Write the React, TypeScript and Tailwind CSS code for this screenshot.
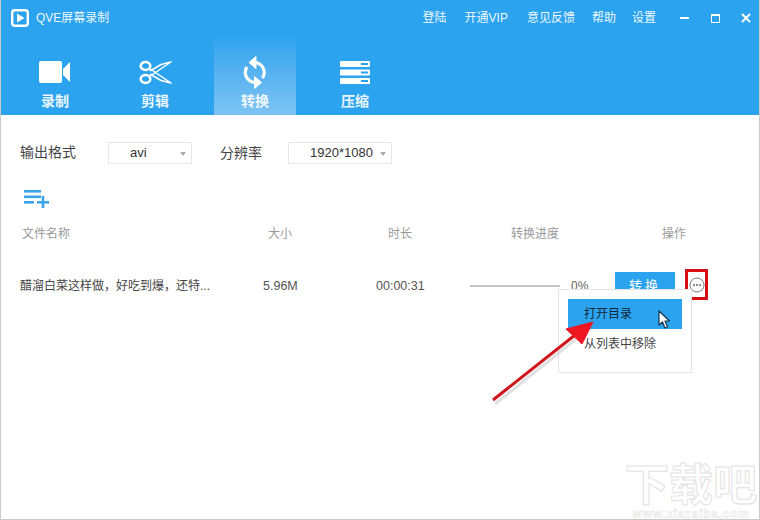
import React from "react";

const font = { fontFamily: '"Liberation Sans","Noto Sans CJK SC",sans-serif' };

function Cam() {
  return (
    <svg width="32" height="22" viewBox="0 0 32 22" fill="#fff">
      <rect x="0" y="0" width="23" height="22" rx="2" />
      <path d="M24 8 L31 1 V21 L24 14 Z" />
    </svg>
  );
}
function Scissors() {
  return (
    <svg width="33" height="25" viewBox="0 0 33 25" fill="none" stroke="#fff">
      <ellipse cx="6.5" cy="6" rx="4.8" ry="4" strokeWidth="2.6" />
      <ellipse cx="6.5" cy="19" rx="4.8" ry="4" strokeWidth="2.6" />
      <path d="M10.5 8.5 L32 23 L22 20.5 L11 14" strokeWidth="1.5" strokeLinejoin="round" />
      <path d="M10.5 16.5 L32 2 L22 4.5 L11 11" strokeWidth="1.5" strokeLinejoin="round" />
    </svg>
  );
}
function Sync() {
  return (
    <svg width="26" height="33" viewBox="0 0 26 33" fill="none">
      <path d="M13 6.5 A10 10 0 0 1 20.5 22" stroke="#fff" strokeWidth="3.2" />
      <path d="M13 26.5 A10 10 0 0 1 5 11" stroke="#fff" strokeWidth="3.2" />
      <path d="M7 6.5 L14 0.5 L14 12.5 Z" fill="#fff" stroke="#fff" strokeLinejoin="round" />
      <path d="M19.5 26.5 L12.5 20.5 L12.5 32.5 Z" fill="#fff" stroke="#fff" strokeLinejoin="round" />
    </svg>
  );
}
function Stack() {
  return (
    <svg width="30" height="23" viewBox="0 0 30 23">
      <rect x="0" y="0" width="30" height="6" rx="1" fill="#fff" />
      <rect x="0" y="8.5" width="30" height="6" rx="1" fill="#fff" />
      <rect x="0" y="17" width="30" height="6" rx="1" fill="#fff" />
      <rect x="21" y="2" width="7" height="2" fill="#2ca3ee" />
      <rect x="21" y="10.5" width="7" height="2" fill="#2ca3ee" />
      <rect x="21" y="19" width="7" height="2" fill="#2ca3ee" />
    </svg>
  );
}

function Tab({ icon, label, active }: { icon: React.ReactNode; label: string; active?: boolean }) {
  return (
    <div
      className={
        "w-[82px] h-[79px] flex flex-col items-center " +
        (active ? "bg-gradient-to-b from-[#2ca3ee] to-[#7cc3f3]" : "")
      }
    >
      <div className="h-[46px] mt-[13px] flex items-center justify-center">{icon}</div>
      <div className="text-[14px] leading-[20px] font-bold text-white/90 -mt-[4px]">{label}</div>
    </div>
  );
}

function Select({ value, w }: { value: string; w: string }) {
  return (
    <div className={"h-[22px] border border-[#e6e6e6] relative flex items-center text-[13px] text-[#333] " + w}>
      <span className="ml-[21px]">{value}</span>
      <span className="absolute right-[5px] top-[9px] w-0 h-0 border-l-[3px] border-r-[3px] border-t-[4px] border-l-transparent border-r-transparent border-t-[#aaa]" />
    </div>
  );
}

export default function App() {
  return (
    <div className="w-[760px] h-[520px] bg-white relative overflow-hidden flex flex-col border-x border-b border-[#c9c9c9]" style={font}>
      <header className="h-[115px] bg-[#2ca3ee] -mx-px shrink-0 flex flex-col">
        <div className="h-[36px] flex items-center text-white/95 text-[12px]">
          <svg className="ml-[11px]" width="18" height="18" viewBox="0 0 18 18">
            <rect x="1.2" y="1.2" width="15.6" height="15.6" rx="2.5" fill="none" stroke="#fff" strokeWidth="2.4" />
            <path d="M6 4.5 L13.5 9 L6 13.5 Z" fill="#fff" />
          </svg>
          <span className="ml-[7px] text-[12px]">QVE屏幕录制</span>
          <div className="ml-auto flex items-center">
            <span className="mr-[18px]">登陆</span>
            <span className="mr-[19px]">开通VIP</span>
            <span className="mr-[17px]">意见反馈</span>
            <span className="mr-[16px]">帮助</span>
            <span className="mr-[24px]">设置</span>
            <span className="w-[9px] h-[2px] bg-white mr-[22px]" />
            <span className="w-[9px] h-[9px] border-[1.5px] border-white border-t-2 mr-[21px]" />
            <svg className="mr-[9px]" width="10" height="10" viewBox="0 0 10 10" stroke="#fff" strokeWidth="2">
              <path d="M1 1 L9 9 M9 1 L1 9" />
            </svg>
          </div>
        </div>
        <div className="flex gap-[18px] pl-[14px]">
          <Tab icon={<Cam />} label="录制" />
          <Tab icon={<Scissors />} label="剪辑" />
          <Tab icon={<Sync />} label="转换" active />
          <Tab icon={<Stack />} label="压缩" />
        </div>
      </header>

      <main className="flex-1 relative text-[12px]">
        <div className="flex items-center pt-[28px] h-[48px]">
          <span className="ml-[19px] w-[88px] text-[14px] text-[#444] -mt-[2px]">输出格式</span>
          <Select value="avi" w="w-[84px]" />
          <span className="ml-[28px] w-[68px] text-[14px] text-[#444]">分辨率</span>
          <Select value="1920*1080" w="w-[104px]" />
        </div>

        <svg className="ml-[23px] mt-[27px] block" width="25" height="18" viewBox="0 0 25 18" fill="#3aa5e8">
          <rect x="0" y="0" width="17" height="2.6" />
          <rect x="0" y="5.5" width="17" height="2.6" />
          <rect x="0" y="11" width="10" height="2.6" />
          <rect x="13" y="11" width="12" height="2.6" />
          <rect x="17.7" y="6" width="2.6" height="12" />
        </svg>

        <div className="flex h-[24px] items-center mt-[14px] text-[#9a9a9a]">
          <span className="ml-[21px] w-[246px]">文件名称</span>
          <span className="w-[120px]">大小</span>
          <span className="w-[123px]">时长</span>
          <span className="w-[151px]">转换进度</span>
          <span>操作</span>
        </div>

        <div className="flex items-center h-[32px] mt-[24px] text-[#444]">
          <span className="ml-[19px] w-[243px]">醋溜白菜这样做，好吃到爆，还特...</span>
          <span className="w-[113px] text-[#555] text-[12.5px]">5.96M</span>
          <span className="w-[94px] text-[#555] text-[12.5px]">00:00:31</span>
          <span className="w-[90px] h-[2px] bg-[#c4c4c4]" />
          <span className="ml-[11px] w-[44px] text-[#666]">0%</span>
          <span className="w-[60px] h-[26px] bg-[#2ca3ee] text-white text-[13px] tracking-[3px] flex items-start justify-center pt-[4px] -mt-[2px]">转换</span>
        </div>

        {/* red highlight + more button */}
        <div className="absolute left-[684px] top-[154px] w-[23px] h-[31px] border-[3px] border-[#d60d14] flex items-center justify-center">
          <svg width="16" height="16" viewBox="0 0 16 16" fill="none">
            <circle cx="8" cy="8" r="7" stroke="#777" />
            <circle cx="5" cy="8" r="0.9" fill="#555" />
            <circle cx="8" cy="8" r="0.9" fill="#555" />
            <circle cx="11" cy="8" r="0.9" fill="#555" />
          </svg>
        </div>

        {/* popup menu */}
        <div className="absolute left-[557px] top-[174px] w-[134px] h-[84px] bg-white border border-[#e4e4e4] pt-[9px] text-[#333]">
          <div className="ml-[9px] w-[114px] h-[30px] bg-[#2ca3ee] text-[#12283a] flex items-center pl-[16px]">打开目录</div>
          <div className="ml-[25px] h-[30px] flex items-center text-[#444]">从列表中移除</div>
        </div>

        {/* cursor */}
        <svg className="absolute left-[657px] top-[195px]" width="13" height="20" viewBox="0 0 13 20">
          <path d="M1 1 L1 15 L4.5 12 L7 18 L9.5 17 L7 11 L11.5 11 Z" fill="#fff" stroke="#16324a" strokeWidth="1.2" strokeLinejoin="round" />
        </svg>

        {/* red arrow */}
        <svg className="absolute left-[484px] top-[200px]" width="112" height="92" viewBox="0 0 112 92" fill="none">
          <path d="M9 87 L90 22" stroke="#999" strokeWidth="3" opacity="0.3" transform="translate(1 2)" />
          <path d="M8 85 L90 20" stroke="#d0161d" strokeWidth="3" />
          <path d="M108 7 L81 14 L97 29 Z" fill="#ee1620" stroke="#ee1620" strokeWidth="1" />
        </svg>

        {/* watermark */}
        <div className="absolute left-[624px] top-[348px] w-[132px] flex flex-col items-center text-white [-webkit-text-stroke:1px_#e2e2e2] leading-none">
          <span className="text-[44px] leading-[45px] font-bold">下载吧</span>
          <span className="text-[12px] leading-[10px] font-bold tracking-[0.7px] mt-[1px] [-webkit-text-stroke:0.5px_#e0e0e0]">www.xiazaiba.com</span>
        </div>
      </main>
    </div>
  );
}
